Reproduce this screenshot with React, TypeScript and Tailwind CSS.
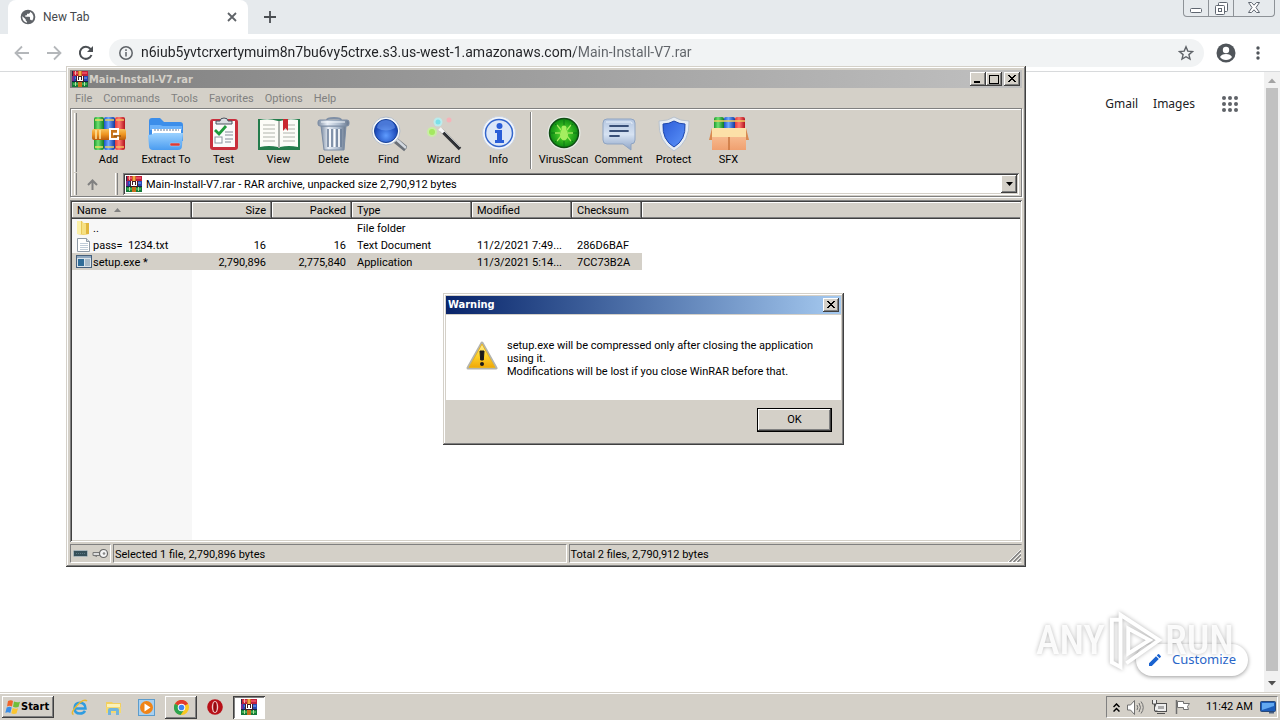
import type { ReactNode } from "react";

const raised =
  "bg-[#d4d0c8] shadow-[inset_-1px_-1px_#404040,inset_1px_1px_#fff,inset_-2px_-2px_#808080]";
const frame =
  "bg-[#d4d0c8] shadow-[inset_-1px_-1px_#404040,inset_1px_1px_#d4d0c8,inset_-2px_-2px_#808080,inset_2px_2px_#fff]";
const uiFont = "font-['Roboto','Noto_Sans',sans-serif]";
const wideFont = "font-['Noto_Sans','Open_Sans',sans-serif]";
const boldFont = "font-['DejaVu_Sans_Condensed','DejaVu_Sans','Noto_Sans',sans-serif] font-bold";

function RarIcon() {
  return (
    <svg width="16" height="16" viewBox="0 0 16 16" shapeRendering="crispEdges" aria-hidden="true">
      <rect width="16" height="16" fill="#2c2340" />
      <rect x="1" y="0" width="15" height="5" fill="#c0203c" />
      <rect x="2" y="1" width="13" height="2" fill="#e8485c" />
      <rect x="0" y="5" width="2" height="5" fill="#7a2a90" />
      <rect x="2" y="5" width="14" height="5" fill="#2748b0" />
      <rect x="3" y="6" width="12" height="2" fill="#5478e0" />
      <rect x="0" y="11" width="16" height="5" fill="#157a38" />
      <rect x="1" y="12" width="14" height="2" fill="#3cae54" />
      <rect x="0" y="10" width="16" height="1" fill="#14204a" />
      <rect x="3" y="0" width="1" height="4" fill="#f0b0a0" />
      <rect x="3" y="11" width="1" height="4" fill="#b8e0a0" />
      <rect x="12" y="11" width="1" height="4" fill="#b8e0a0" />
      <rect x="6" y="0" width="4" height="16" fill="#c8701c" />
      <rect x="7" y="0" width="2" height="5" fill="#f4a848" />
      <rect x="4" y="5" width="8" height="6" fill="#401c28" />
      <rect x="5" y="5" width="1" height="5" fill="#fff" />
      <rect x="10" y="5" width="1" height="5" fill="#fff" />
      <rect x="6" y="9" width="4" height="1" fill="#fff" />
      <rect x="7" y="6" width="2" height="3" fill="#fff" />
    </svg>
  );
}

function Svg({ children, w = 36 }: { children: ReactNode; w?: number }) {
  return (
    <svg width={w} height="36" viewBox={`0 0 ${w} 36`} aria-hidden="true">
      {children}
    </svg>
  );
}

function Defs() {
  return (
    <svg width="0" height="0" className="absolute" aria-hidden="true">
      <defs>
        <linearGradient id="red" x2="1">
          <stop stopColor="#e23a3a" /><stop offset=".4" stopColor="#ff7a70" /><stop offset="1" stopColor="#b3121e" />
        </linearGradient>
        <linearGradient id="green" x2="1">
          <stop stopColor="#1d9a2e" /><stop offset=".4" stopColor="#6fe070" /><stop offset="1" stopColor="#0f7a24" />
        </linearGradient>
        <linearGradient id="blue" x2="1">
          <stop stopColor="#1e55c8" /><stop offset=".4" stopColor="#6fa8ff" /><stop offset="1" stopColor="#123a9c" />
        </linearGradient>
        <linearGradient id="gold" x2="0" y2="1">
          <stop stopColor="#f9c25a" /><stop offset=".5" stopColor="#ee9420" /><stop offset="1" stopColor="#b85a0c" />
        </linearGradient>
        <linearGradient id="folder" x2="0" y2="1">
          <stop stopColor="#9cd2ff" /><stop offset="1" stopColor="#4a9cf0" />
        </linearGradient>
        <linearGradient id="steel" x2="1">
          <stop stopColor="#7d8da3" /><stop offset=".3" stopColor="#e8eef6" /><stop offset=".7" stopColor="#a9b8cb" /><stop offset="1" stopColor="#66758b" />
        </linearGradient>
        <radialGradient id="lens" cy=".7">
          <stop stopColor="#5f9cff" /><stop offset="1" stopColor="#1a48b8" />
        </radialGradient>
        <radialGradient id="scan">
          <stop stopColor="#5fe832" /><stop offset="1" stopColor="#0c8a12" />
        </radialGradient>
        <linearGradient id="bubble" x2="0" y2="1">
          <stop stopColor="#b4c6e0" /><stop offset=".5" stopColor="#d6e2f2" /><stop offset="1" stopColor="#8ea4c6" />
        </linearGradient>
        <linearGradient id="shield" x2="1" y2="1">
          <stop stopColor="#2c5cd8" /><stop offset="1" stopColor="#5c94fa" />
        </linearGradient>
        <linearGradient id="box" x2="0" y2="1">
          <stop stopColor="#f9c49a" /><stop offset="1" stopColor="#f0a070" />
        </linearGradient>
        <linearGradient id="warn" x2="0" y2="1">
          <stop stopColor="#fff0a0" /><stop offset=".5" stopColor="#ffd42a" /><stop offset="1" stopColor="#f0a808" />
        </linearGradient>
      </defs>
    </svg>
  );
}

const icons: Record<string, ReactNode> = {
  Add: (
    <Svg>
      <rect x="3" y="1" width="10" height="33" rx="2" fill="url(#green)" />
      <rect x="13" y="1" width="11" height="33" rx="2" fill="url(#blue)" />
      <rect x="24" y="1" width="10" height="33" rx="2" fill="url(#red)" />
      <path d="M4 4h8M4 31h8" stroke="#f0e060" strokeWidth="1.500" />
      <path d="M14 4h9M14 31h9" stroke="#e8d060" strokeWidth="1.500" />
      <path d="M25 4h8M25 31h8" stroke="#f5c060" strokeWidth="1.500" />
      <rect x="1" y="13" width="34" height="11" rx="2" fill="url(#gold)" />
      <path d="M5 14v9M9 14v9" stroke="#ffe6a0" strokeWidth="1.500" />
      <path d="M27 17v-4h-8v10h8v-3" fill="#c8741c" stroke="#fff" strokeWidth="2" />
      <path d="M22 18h6" stroke="#fff" strokeWidth="2.500" />
      <path d="M23 20h7" stroke="#7a4208" strokeWidth="1" />
    </Svg>
  ),
  "Extract To": (
    <Svg>
      <path d="M1 5q0-3 3-3h8l4 4h16q3 0 3 3v16H1z" fill="#3c8eea" />
      <path d="M2 9h10l3 1h19v4H2z" fill="#6cb2fa" />
      <path d="M4 13h29v8H4z" fill="#fff" />
      <path d="M6 14h25" stroke="#b0bccc" strokeWidth="2" strokeDasharray="2 1" />
      <path d="M0 19q4 0 6-2h29l-1 13q0 4-4 4H5q-4 0-4-4z" fill="url(#folder)" />
      <rect x="22" y="27" width="10" height="3" rx="1" fill="#e03a34" stroke="#b5d4f5" strokeWidth=".5" />
    </Svg>
  ),
  Test: (
    <Svg>
      <rect x="4" y="3" width="28" height="31" rx="3" fill="#c92e3c" />
      <rect x="7" y="5" width="22" height="26" fill="#fafafa" />
      <path d="M10 8V5h4q0-3 4-3t4 3h4v3z" fill="#d9dde2" stroke="#49525e" strokeWidth="1" />
      <path d="m9 14 4 4 7-8" fill="none" stroke="#1f9a3c" strokeWidth="2.800" />
      <rect x="9" y="21" width="7" height="6" fill="#fff" stroke="#8b959f" />
      <path d="M19 16h8M19 19h8M19 23h8M19 26h6" stroke="#848c98" strokeWidth="1.200" />
    </Svg>
  ),
  View: (
    <Svg w={44}>
      <path d="M1 3h42v31H1z" fill="#247c4c" />
      <path d="M3 4q9-2 18 1v26q-9-2-18 0zM41 4q-9-2-18 1v26q9-2 18 0z" fill="#fcfcf8" />
      <path d="M21 5h2v27h-2z" fill="#adb3ad" />
      <path d="M6 9h12M6 13h12M6 17h12M6 21h12M6 25h12M26 9h12M26 13h12M26 17h12M26 21h12M26 25h12" stroke="#c9cbc5" strokeWidth="1.300" />
      <path d="M26 3h5v12l-2.500-3-2.500 3z" fill="#c9282f" />
    </Svg>
  ),
  Delete: (
    <Svg>
      <path d="M11 4q0-2 7-2t7 2" fill="none" stroke="#7f8fa5" strokeWidth="2" />
      <path d="M5 10h25l-2 24H8z" fill="url(#steel)" stroke="#7b8ca4" />
      <path d="M12 13v18M16 13v18M21 13v18M25 13v18" stroke="#6a7c96" strokeWidth="1.500" />
      <path d="M14 13v18M18.500 13v18M23 13v18" stroke="#fff" strokeWidth="1.500" />
      <rect x="2" y="4" width="31" height="6" rx="2" fill="url(#steel)" stroke="#7d8da4" />
      <path d="M5 6h24" stroke="#f4f8fc" />
    </Svg>
  ),
  Find: (
    <Svg>
      <path d="m24 24 11 9" stroke="#6a7078" strokeWidth="6" />
      <path d="m25 23 10 9" stroke="#d3d9e0" strokeWidth="2.500" />
      <circle cx="15" cy="15" r="14" fill="#f5f8fb" stroke="#b3bdca" />
      <circle cx="15" cy="15" r="11.500" fill="url(#lens)" stroke="#174196" />
      <path d="M6 12q9 5 18 0-1-8-9-8t-9 8" fill="#7aa8f5" opacity=".5" />
    </Svg>
  ),
  Wizard: (
    <Svg>
      <path d="m15 14 19 19" stroke="#303236" strokeWidth="3.500" />
      <path d="m16 13 18 18" stroke="#b5b9bd" strokeWidth="1" />
      <path d="m13.500 12.500 4 4" stroke="#f5f5f5" strokeWidth="3.500" />
      <circle cx="6" cy="16" r="5" fill="#c4f59a" opacity=".8" />
      <circle cx="6" cy="16" r="3" fill="#a4e860" />
      <circle cx="12" cy="6" r="4.500" fill="#b4f2f6" opacity=".8" />
      <circle cx="12" cy="6" r="2.500" fill="#7ae0ea" />
      <circle cx="23" cy="4" r="2.500" fill="#f4b3b9" />
    </Svg>
  ),
  Info: (
    <Svg>
      <circle cx="18" cy="17" r="16.500" fill="#f2f5fa" stroke="#ccd4e0" />
      <circle cx="18" cy="17" r="13.500" fill="#dce7f8" stroke="#3466cc" strokeWidth="1.500" />
      <circle cx="18.500" cy="10" r="3" fill="#2a5ed8" />
      <path d="M14 14h7v10h2v3h-9v-3h2v-7h-2z" fill="#2a5ed8" />
    </Svg>
  ),
  VirusScan: (
    <Svg>
      <circle cx="18" cy="17" r="16.500" fill="#e8ece8" />
      <circle cx="18" cy="17" r="14.500" fill="url(#scan)" stroke="#114d14" strokeWidth="1.500" />
      <path d="M18 4v27M5 17h26M9 8l18 18M27 8 9 26" stroke="#086e12" strokeWidth=".8" />
      <path d="m11 9 4 5m10-5-4 5M9 17h5m8 0h5m-16 8 4-5m10 5-4-5" stroke="#a4ee60" strokeWidth="1.300" />
      <ellipse cx="18" cy="18.500" rx="4" ry="6" fill="#a4ee60" />
      <circle cx="18" cy="12" r="2.500" fill="#a4ee60" />
    </Svg>
  ),
  Comment: (
    <Svg>
      <path d="M6 3h24q4 0 4 4v17q0 4-4 4v6l-8-6H6q-4 0-4-4V7q0-4 4-4" fill="url(#bubble)" stroke="#8fa4c2" />
      <path d="M5 6h25q1 0 1 2" fill="none" stroke="#eaf2fb" />
      <path d="M9 10h18M9 15h18M9 20h9" stroke="#3a5078" strokeWidth="1.800" strokeLinecap="round" />
    </Svg>
  ),
  Protect: (
    <Svg>
      <path d="M18 1q6 4 15 4 1 21-15 30Q2 26 3 5q9 0 15-4" fill="#e6ecf3" stroke="#b8c2ce" />
      <path d="M18 5q5 3 11 3 1 16-11 23Q6 24 7 8q6 0 11-3" fill="url(#shield)" stroke="#1f48ac" />
    </Svg>
  ),
  SFX: (
    <Svg w={40}>
      <rect x="5" y="1" width="10" height="16" rx="2" fill="url(#green)" />
      <rect x="15" y="1" width="11" height="16" rx="2" fill="url(#blue)" />
      <rect x="26" y="1" width="10" height="16" rx="2" fill="url(#red)" />
      <path d="M5 5h10M15 5h11M26 5h10" stroke="#f0d060" strokeWidth="1.500" />
      <path d="M3 15h34v19H3z" fill="url(#box)" />
      <path d="M3 12h34l1 9H2z" fill="#fce0a8" />
      <path d="m3 12-3 12h3zM37 12l3 12h-3z" fill="#d98a50" />
      <path d="M20 21v13" stroke="#c8743e" strokeWidth="1.500" />
    </Svg>
  ),
};

const tools: [string, string][] = [
  ["Add", "w-[55px]"],
  ["Extract To", "w-[60px]"],
  ["Test", "w-[55px]"],
  ["View", "w-[55px]"],
  ["Delete", "w-[55px]"],
  ["Find", "w-[55px]"],
  ["Wizard", "w-[55px]"],
  ["Info", "w-[55px]"],
  ["|", ""],
  ["VirusScan", "w-[55px]"],
  ["Comment", "w-[55px]"],
  ["Protect", "w-[55px]"],
  ["SFX", "w-[55px]"],
];

function Gripper() {
  return <span className="w-[3px] self-stretch border-l border-r border-l-white border-r-[#808080]" />;
}

function FolderIcon() {
  return (
    <svg width="15" height="16" viewBox="0 0 15 16" aria-hidden="true">
      <path d="M1 1h5l1 2h6v11l-5 1-7-1z" fill="#e9c85a" />
      <path d="M1 1h4v13H1z" fill="#fbf0a8" />
      <path d="m6 2 4 2v11l-4-1z" fill="#f6e083" />
      <path d="M10 3h3v11h-3z" fill="#e0b640" />
    </svg>
  );
}
function TextIcon() {
  return (
    <svg width="15" height="16" viewBox="0 0 15 16" aria-hidden="true">
      <path d="M1.500 1.500h9l3 3v10h-12z" fill="#fff" stroke="#8f9aa6" />
      <path d="M10.500 1.500v3h3" fill="#d8e0e8" stroke="#8f9aa6" />
      <path d="M4 6.500h8M4 8.500h8M4 10.500h8M4 12.500h8" stroke="#c0ccd8" />
    </svg>
  );
}
function ExeIcon() {
  return (
    <svg width="16" height="16" viewBox="0 0 16 16" aria-hidden="true">
      <rect x=".5" y="1.500" width="15" height="12" fill="#d8e2ea" stroke="#46607c" />
      <path d="M1 2h14v2H1z" fill="#8fa8c0" />
      <path d="M2 5h6v7H2z" fill="#2f6c98" />
      <path d="M9 5h5v7H9z" fill="#a8bac8" />
    </svg>
  );
}

const rows = [
  { icon: <FolderIcon />, name: "..", size: "", packed: "", type: "File folder", mod: "", sum: "", sel: false },
  { icon: <TextIcon />, name: "pass=  1234.txt", size: "16", packed: "16", type: "Text Document", mod: "11/2/2021 7:49...", sum: "286D6BAF", sel: false },
  { icon: <ExeIcon />, name: "setup.exe *", size: "2,790,896", packed: "2,775,840", type: "Application", mod: "11/3/2021 5:14...", sum: "7CC73B2A", sel: true },
];

const headers: [string, string, string][] = [
  ["Name", "w-[120px]", "text-left pl-[5px]"],
  ["Size", "w-[80px]", "text-right pr-[6px]"],
  ["Packed", "w-[80px]", "text-right pr-[6px]"],
  ["Type", "w-[120px]", "text-left pl-[5px]"],
  ["Modified", "w-[100px]", "text-left pl-[5px]"],
  ["Checksum", "w-[70px]", "text-left pl-[5px]"],
];

function CaptionButton({ label, children }: { label: string; children: ReactNode }) {
  return (
    <button aria-label={label} className={`flex h-[14px] w-4 items-center justify-center ${raised}`}>
      <svg width="12" height="12" viewBox="0 0 12 12" fill="none" stroke="#000" shapeRendering="crispEdges" aria-hidden="true">
        {children}
      </svg>
    </button>
  );
}
const cross = <path d="m2 2 7 7M3 2l7 7M9 2 2 9M10 2 3 9" strokeWidth="1" shapeRendering="auto" />;

function WinRar() {
  return (
    <section aria-label="WinRAR" className={`absolute top-[66px] right-[254px] left-[66px] flex h-[501px] flex-col p-1 text-[11px] leading-[17px] text-black ${frame} ${uiFont}`}>
      <header className="flex h-[18px] shrink-0 items-center bg-linear-to-r from-[#808080] to-[#c0c0c0] pr-0.5 pl-0.5">
        <RarIcon />
        <h1 className={`flex-1 pl-px text-[#d4d0c8] ${boldFont}`}>Main-Install-V7.rar</h1>
        <CaptionButton label="Minimize"><path d="M2 9h6" strokeWidth="2" /></CaptionButton>
        <CaptionButton label="Maximize"><path d="M1.500 2.500h9v8h-9zM1 2h10" strokeWidth="1" /></CaptionButton>
        <span className="w-0.5" />
        <CaptionButton label="Close">{cross}</CaptionButton>
      </header>
      <nav className="flex h-[20px] shrink-0 items-center gap-[11px] pl-[5px] text-[#808080]">
        {["File", "Commands", "Tools", "Favorites", "Options", "Help"].map((m) => (
          <button key={m}>{m}</button>
        ))}
      </nav>
      <div className="flex shrink-0 flex-col border border-[#808080] shadow-[inset_1px_1px_#fff,1px_1px_#fff]">
        <div className="flex h-16 items-stretch pt-[3px] pl-[3px]">
          <div className="flex py-px pr-1"><Gripper /></div>
          {tools.map(([name, w]) =>
            name === "|" ? (
              <div key={name} className="flex w-2.5 justify-center pb-1">
                <span className="w-0.5 border-l border-l-[#808080] bg-white" />
              </div>
            ) : (
              <button key={name} className={`flex flex-col items-center pt-1 ${w}`}>
                {icons[name]}
                <span className="-mt-px whitespace-nowrap">{name}</span>
              </button>
            ),
          )}
        </div>
        <div className="flex h-[23px] items-stretch pr-0.5 pb-px pl-[3px]">
          <Gripper />
          <button aria-label="Up one level" className="flex w-[30px] items-center justify-center">
            <svg width="11" height="11" viewBox="0 0 11 11" fill="none" stroke="#808080" strokeWidth="2" aria-hidden="true">
              <path d="M5.500 11V2M1 6l4.500-4.500L10 6" />
            </svg>
          </button>
          <span className="w-2" />
          <Gripper />
          <div className="ml-[5px] flex flex-1 items-center bg-white py-0.5 pr-0.5 pl-[3px] shadow-[inset_1px_1px_#808080,inset_-1px_-1px_#fff,inset_2px_2px_#404040,inset_-2px_-2px_#d4d0c8]">
            <RarIcon />
            <select aria-label="Archive path" className="h-full flex-1 appearance-none bg-transparent pl-1 outline-none">
              <option>Main-Install-V7.rar - RAR archive, unpacked size 2,790,912 bytes</option>
            </select>
            <span className={`pointer-events-none flex w-4 items-center justify-center self-stretch ${raised}`}>
              <svg width="7" height="4" viewBox="0 0 7 4" aria-hidden="true"><path d="M0 0h7L3.500 4z" /></svg>
            </span>
          </div>
        </div>
      </div>
      <div className="mt-[3px] flex-1 overflow-hidden bg-[linear-gradient(to_right,#f7f7f7_122px,#fff_122px)] p-0.5 shadow-[inset_1px_1px_#808080,inset_-1px_-1px_#fff,inset_2px_2px_#404040,inset_-2px_-2px_#d4d0c8]">
        <table className="w-full table-fixed border-collapse">
          <thead>
            <tr className="h-[17px] bg-[#d4d0c8]">
              {headers.map(([h, w, a]) => (
                <th key={h} className={`pt-px pb-0 font-normal leading-[16px] shadow-[inset_-1px_-1px_#404040,inset_-2px_-2px_#808080,inset_1px_1px_#fff] ${w} ${a}`}>
                  {h}
                  {h === "Name" && (
                    <svg className="mb-0.5 ml-2 inline" width="7" height="4" viewBox="0 0 7 4" aria-hidden="true"><path d="M0 4h7L3.500 0z" fill="#808080" /></svg>
                  )}
                </th>
              ))}
              <td className="shadow-[inset_0_-1px_#404040,inset_0_-2px_#808080,inset_1px_1px_#fff]" />
            </tr>
          </thead>
          <tbody className="leading-[15px]">
            {rows.map((r) => {
              const bg = r.sel ? "bg-[#d4d0c8]" : "";
              return (
                <tr key={r.name} className="h-[17px] whitespace-pre">
                  <td className={`py-0 pl-1 ${bg}`}>
                    <span className="flex h-[17px] items-center">
                      <span className="flex w-[17px]">{r.icon}</span>
                      <span className="pt-0.5">{r.name}</span>
                    </span>
                  </td>
                  <td className={`pt-0.5 pb-0 pr-[6px] text-right ${bg}`}>{r.size}</td>
                  <td className={`pt-0.5 pb-0 pr-[6px] text-right ${bg}`}>{r.packed}</td>
                  <td className={`pt-0.5 pb-0 pl-[5px] ${bg}`}>{r.type}</td>
                  <td className={`pt-0.5 pb-0 pl-[5px] ${bg}`}>{r.mod}</td>
                  <td className={`pt-0.5 pb-0 pl-[5px] ${bg}`}>{r.sum}</td>
                  <td />
                </tr>
              );
            })}
          </tbody>
        </table>
      </div>
      <footer className="mt-0.5 flex h-[19px] shrink-0 gap-0.5 leading-[19px] whitespace-nowrap">
        <div className="flex w-[41px] items-center justify-center gap-1 border border-t-[#808080] border-r-white border-b-white border-l-[#808080]">
          <svg width="15" height="7" viewBox="0 0 15 7" aria-hidden="true">
            <rect x=".5" y=".5" width="14" height="6" rx="1" fill="#37505a" stroke="#a8b4ba" />
            <path d="M3 3.500h9" stroke="#5d7985" strokeDasharray="1 1" />
          </svg>
          <svg width="17" height="11" viewBox="0 0 17 11" aria-hidden="true">
            <path d="M1 4.500h9v3H1zM2 7.500l3 1" fill="#ddd" stroke="#777" />
            <circle cx="11.500" cy="5.500" r="4" fill="#f4f4f4" stroke="#666" strokeWidth="1.200" />
            <circle cx="12" cy="5.500" r="1.300" fill="#888" />
          </svg>
        </div>
        <div className="flex-1 border border-t-[#808080] border-r-white border-b-white border-l-[#808080] pl-px">Selected 1 file, 2,790,896 bytes</div>
        <div className="flex flex-1 justify-between border border-t-[#808080] border-r-[#d4d0c8] border-b-white border-l-[#808080] pl-px">
          Total 2 files, 2,790,912 bytes
          <svg className="self-end" width="13" height="13" viewBox="0 0 13 13" aria-hidden="true">
            <path d="M0 13 13 0M4 13l9-9M8 13l5-5" stroke="#fff" />
            <path d="M1.500 13 13 1.500M5.500 13 13 5.500M9.500 13 13 9.500" stroke="#808080" strokeWidth="1.500" />
          </svg>
        </div>
      </footer>
    </section>
  );
}

function Warning() {
  return (
    <div role="alertdialog" aria-labelledby="warn-title" className={`absolute top-[293px] left-[443px] flex h-[152px] w-[401px] flex-col p-[3px] text-[11px] text-black ${frame} ${uiFont}`}>
      <header className="flex h-[18px] shrink-0 items-center justify-between bg-linear-to-r from-[#0a246a] to-[#a6caf0] px-0.5">
        <h2 id="warn-title" className={`text-white ${boldFont}`}>Warning</h2>
        <CaptionButton label="Close">{cross}</CaptionButton>
      </header>
      <div className="mt-px flex flex-1 items-start bg-white pt-6 pl-5">
        <svg className="mt-0.5" width="32" height="30" viewBox="0 0 32 30" aria-hidden="true">
          <path d="M16 2 30 27H2z" fill="url(#warn)" stroke="#b4b4ac" strokeWidth="3" strokeLinejoin="round" />
          <path d="M16 3 29 26.500H3z" fill="url(#warn)" stroke="#e8b420" strokeWidth="1" strokeLinejoin="round" />
          <path d="M14 10h4l-.7 9h-2.600z" fill="#1a1a1a" stroke="#1a1a1a" strokeLinejoin="round" />
          <circle cx="16" cy="23" r="2" fill="#1a1a1a" />
        </svg>
        <p className="ml-[9px] leading-[13px] whitespace-nowrap">
          setup.exe will be compressed only after closing the application
          <br />
          using it.
          <br />
          Modifications will be lost if you close WinRAR before that.
        </p>
      </div>
      <footer className="flex h-[42px] shrink-0 justify-end pt-2 pr-[9px]">
        <button className="h-6 w-[75px] border border-black bg-[#d4d0c8] shadow-[inset_-1px_-1px_#404040,inset_1px_1px_#fff,inset_-2px_-2px_#808080]">OK</button>
      </footer>
    </div>
  );
}

function Browser() {
  return (
    <main className={`flex min-h-0 flex-1 flex-col bg-white text-[#202124] ${uiFont}`}>
      <div className="flex h-[34px] shrink-0 items-start bg-[#e6eaed] pl-2">
        <div className="flex h-[34px] w-60 items-center rounded-t-lg bg-white pr-2 pl-3">
          <svg width="16" height="16" viewBox="0 0 24 24" fill="#5f6368" aria-hidden="true">
            <path d="M12 1a11 11 0 1 0 0 22 11 11 0 0 0 0-22m-1.500 19.500A8.600 8.600 0 0 1 3.500 11l5 4.500v1.500l2 2zm7.500-3c-.3-1-1-1.500-2-1.500h-1v-3.500l-1-1H8v-2h2.500V7h3l1.500-1.500V4a8.600 8.600 0 0 1 3 13.500" />
          </svg>
          <span className="ml-[7px] flex-1 text-[12px] text-[#45494d]">New Tab</span>
          <button aria-label="Close tab">
            <svg width="16" height="16" viewBox="0 0 16 16" stroke="#5f6368" strokeWidth="1.800" aria-hidden="true"><path d="m4 4 8 8M12 4l-8 8" /></svg>
          </button>
        </div>
        <button aria-label="New tab" className="ml-3.5 flex h-[34px] items-center">
          <svg width="16" height="16" viewBox="0 0 16 16" stroke="#4a4e52" strokeWidth="1.800" aria-hidden="true"><path d="M8 2v12M2 8h12" /></svg>
        </button>
        <div className="mr-[5px] ml-auto flex h-[17px] rounded-b border border-t-0 border-[#8d9297]">
          <button aria-label="Minimize window" className="flex w-[25px] items-end justify-center border-r border-[#8d9297] pb-[3px]">
            <svg width="12" height="5" viewBox="0 0 12 5" aria-hidden="true"><rect x=".5" y=".5" width="11" height="4" rx="1" fill="#fff" stroke="#5f6670" /></svg>
          </button>
          <button aria-label="Restore window" className="flex w-[25px] items-end justify-center border-r border-[#8d9297] pb-px">
            <svg width="13" height="13" viewBox="0 0 13 13" fill="#fff" stroke="#5f6670" aria-hidden="true"><rect x="3.500" y=".5" width="9" height="9" rx="1" /><rect x=".5" y="3.500" width="9" height="9" rx="1" /><rect x="3.500" y="6.500" width="3" height="3" /></svg>
          </button>
          <button aria-label="Close window" className="flex w-10 items-end justify-center pb-[3px]">
            <svg width="12" height="11" viewBox="0 0 12 11" aria-hidden="true"><path d="M.5.500h3L6 3.200 8.500.500h3L8 5.500l3.500 5h-3L6 7.800l-2.500 2.700h-3L4 5.500z" fill="#fff" stroke="#5f6670" /></svg>
          </button>
        </div>
      </div>
      <div className="flex h-[38px] shrink-0 items-center border-b border-[#d8dadc] pr-[18px] pl-3.5">
        <div className="flex items-center gap-4 text-[#5f6368]">
          <button aria-label="Back"><svg width="16" height="16" viewBox="0 0 16 16" fill="none" stroke="#b4b7ba" strokeWidth="1.800" aria-hidden="true"><path d="M15 8H2M8 1.500 1.500 8 8 14.500" /></svg></button>
          <button aria-label="Forward"><svg width="16" height="16" viewBox="0 0 16 16" fill="none" stroke="#b4b7ba" strokeWidth="1.800" aria-hidden="true"><path d="M1 8h13M8 1.500 14.500 8 8 14.500" /></svg></button>
          <button aria-label="Reload"><svg width="16" height="16" viewBox="0 0 16 16" fill="none" stroke="#4c5054" strokeWidth="2" aria-hidden="true"><path d="M13.500 10A6 6 0 1 1 12.500 4L14 5.500" /><path d="M15 1v6H9z" fill="#4c5054" stroke="none" /></svg></button>
        </div>
        <div className="ml-[15px] flex h-7 flex-1 items-center rounded-full bg-[#f1f3f4] px-2.5">
          <svg width="14" height="14" viewBox="0 0 14 14" fill="none" stroke="#5f6368" strokeWidth="1.500" aria-hidden="true"><circle cx="7" cy="7" r="6.200" /><path d="M7 6v4.500M7 3.300v1.600" /></svg>
          <input
            aria-label="Address"
            readOnly
            className="ml-2 min-w-0 flex-1 bg-[linear-gradient(to_right,#202124_434px,#5f6368_434px)] bg-clip-text text-[14px] text-transparent outline-none"
            value="n6iub5yvtcrxertymuim8n7bu6vy5ctrxe.s3.us-west-1.amazonaws.com/Main-Install-V7.rar"
          />
          <button aria-label="Bookmark"><svg width="16" height="16" viewBox="0 0 16 16" fill="none" stroke="#5f6368" strokeWidth="1.400" aria-hidden="true"><path d="m8 1.800 1.800 4.300 4.700.4-3.600 3.100 1.100 4.500-4-2.400-4 2.400 1.100-4.500L1.500 6.500l4.700-.4z" /></svg></button>
        </div>
        <button aria-label="Profile" className="ml-3"><svg width="20" height="20" viewBox="0 0 20 20" aria-hidden="true"><circle cx="10" cy="10" r="9.500" fill="#50555a" /><circle cx="10" cy="7" r="3.200" fill="#fff" /><path d="M4 14q1.500-3 6-3t6 3q-2 3-6 3t-6-3" fill="#fff" /></svg></button>
        <button aria-label="Menu" className="ml-[18px]"><svg width="8" height="16" viewBox="0 0 8 16" fill="#50555a" aria-hidden="true"><circle cx="4" cy="3" r="1.700" /><circle cx="4" cy="8" r="1.700" /><circle cx="4" cy="13" r="1.700" /></svg></button>
      </div>
      <div className={`flex min-h-0 flex-1 ${wideFont}`}>
        <div className="flex flex-1 flex-col items-end justify-between">
          <div className="flex items-center gap-[15px] pt-6 pr-[26px] text-[12px] leading-4">
            <a href="#gmail">Gmail</a>
            <a href="#images">Images</a>
            <button aria-label="Apps" className="ml-3"><svg width="16" height="16" viewBox="0 0 16 16" fill="#5f6368" aria-hidden="true">{[2, 8, 14].map((y) => [2, 8, 14].map((x) => <circle key={`${x}-${y}`} cx={x} cy={y} r="2" />))}</svg></button>
          </div>
          <button className="mr-4 mb-4 flex h-8 w-28 items-center rounded-full bg-white pl-3 text-[13px] text-[#2a66c8] shadow-[0_1px_4px_rgba(0,0,0,0.4)]">
            <svg width="14" height="14" viewBox="0 0 14 14" fill="#1a63d0" aria-hidden="true"><path d="M1 10.200V13h2.800l7-7L8 3.200zM12.700 4.100q.6-.6 0-1.200l-1.600-1.600q-.6-.6-1.200 0L8.800 2.400l2.800 2.800z" /></svg>
            <span className="ml-2.5">Customize</span>
          </button>
        </div>
        <div aria-hidden="true" className="flex w-4 flex-col items-center bg-[#f1f1f1]">
          <svg className="h-4 shrink-0" width="8" height="16" viewBox="0 0 8 16"><path d="M0 11h8L4 6.500z" fill="#a3a3a3" /></svg>
          <div className="w-3 flex-1 bg-[#c1c1c1]" />
          <svg className="h-[21px] shrink-0" width="8" height="21" viewBox="0 0 8 21"><path d="M0 10h8l-4 4.500z" fill="#505050" /></svg>
        </div>
      </div>
    </main>
  );
}

function Watermark() {
  return (
    <div className="pointer-events-none absolute right-[46px] bottom-[49px] flex items-center font-['Liberation_Sans_Narrow','Roboto_Condensed','Liberation_Sans',sans-serif] text-[40px] leading-none font-medium text-white/90 [filter:drop-shadow(0_0_2px_rgba(0,0,0,0.3))]">
      <span>ANY</span>
      <svg className="mx-0.5" width="56" height="60" viewBox="0 0 58 60" fill="none" stroke="#fff" strokeWidth="4" aria-hidden="true">
        <path d="M12 8H5v44l9 5V3l40 26-34 24M22 17v26l22-14zM22 8l32 21" />
      </svg>
      <span>RUN</span>
    </div>
  );
}

const win = "flex h-[23px] w-8 items-center justify-center";

function Taskbar() {
  return (
    <footer className={`flex h-7 shrink-0 items-center border-t border-[#d4d0c8] bg-[#d4d0c8] pt-px pr-0.5 pl-0.5 text-[11px] text-black shadow-[inset_0_1px_#fff] ${uiFont}`}>
      <button className={`flex h-[22px] w-[52px] items-center pl-[3px] ${raised} ${boldFont}`}>
        <svg width="16" height="16" viewBox="0 0 16 16" aria-hidden="true">
          <path d="M3 2q3-1.500 5 0L7 7.500q-2.500-1.500-5 0z" fill="#f0642a" />
          <path d="M9 2.500q3 1.500 6 .3L13.500 8q-3 1-5.500-.2z" fill="#6fbe3a" />
          <path d="M1.700 8.500q3-1.300 5 0L5.300 14q-2-1.500-5-.2z" fill="#3a8ee8" />
          <path d="M7.700 9q2.500 1.500 5.300.3L11.500 14.500q-3 1-5.200-.2z" fill="#fbc52e" />
        </svg>
        Start
      </button>
      <div className="flex flex-1 items-center pl-[17px]">
        <a href="#ie" aria-label="Internet Explorer" className="mr-[17px]">
          <svg width="17" height="17" viewBox="0 0 17 17" fill="none" aria-hidden="true">
            <path d="M3.500 9.500h11q-.2-5.800-5.500-5.800T3.500 9.200q0 5.300 5.500 5.300 3.500 0 5-2.700" stroke="#2f9ce0" strokeWidth="2.500" />
            <path d="M2.500 15.500Q-1 14 6 6.500T16 2" stroke="#e8b830" strokeWidth="1.500" />
          </svg>
        </a>
        <a href="#explorer" aria-label="Explorer" className="mr-4">
          <svg width="17" height="17" viewBox="0 0 17 17" aria-hidden="true">
            <path d="M1 3h6l1 1h8v10H1z" fill="#f2cf60" /><path d="M2 5h13v5H2z" fill="#fbf1b8" />
            <path d="M1 8h15v6H1z" fill="#f4d970" /><path d="M3 16V11q0-2 2-2h7q2 0 2 2v5h-3v-4H6v4z" fill="#72b4dc" />
          </svg>
        </a>
        <a href="#media" aria-label="Media Player" className="mr-2.5">
          <svg width="17" height="17" viewBox="0 0 17 17" aria-hidden="true">
            <rect x=".5" y=".5" width="16" height="16" fill="#a8d0f0" stroke="#5c9ccc" /><circle cx="8.500" cy="8.500" r="6.500" fill="#f08418" /><path d="m6.500 4.500 6 4-6 4z" fill="#fff" />
          </svg>
        </a>
        <button aria-label="Chrome" className={`${win} ${raised}`}>
          <svg width="15" height="15" viewBox="0 0 16 16" aria-hidden="true">
            <circle cx="8" cy="8" r="8" fill="#f9c822" /><path d="M8 8 1 4a8 8 0 0 1 14 0z" fill="#e23b2e" /><path d="M8 8 1 4a8 8 0 0 0 6 12l4-6z" fill="#2da44e" />
            <circle cx="8" cy="8" r="4" fill="#fff" /><circle cx="8" cy="8" r="3" fill="#3f83f0" />
          </svg>
        </button>
        <a href="#opera" aria-label="Opera" className="mx-2.5">
          <svg width="16" height="16" viewBox="0 0 16 16" aria-hidden="true">
            <circle cx="8" cy="8" r="7.800" fill="#b81018" /><ellipse cx="8" cy="8" rx="3.200" ry="6" fill="#f0c8c8" /><ellipse cx="8" cy="8" rx="1.800" ry="5" fill="#98080f" />
          </svg>
        </a>
        <button aria-label="WinRAR" className={`${win} bg-white shadow-[inset_1px_1px_#404040,inset_-1px_-1px_#fff,inset_2px_2px_#808080]`}><RarIcon /></button>
      </div>
      <div className="flex h-[22px] w-[172px] items-center justify-between border border-t-[#808080] border-r-white border-b-white border-l-[#808080] pr-px pl-1.5">
        <svg width="7" height="9" viewBox="0 0 7 9" fill="none" stroke="#000" strokeWidth="1.500" aria-hidden="true"><path d="m.5 4 3-3 3 3M.5 8.500l3-3 3 3" /></svg>
        <svg width="17" height="15" viewBox="0 0 17 15" fill="none" stroke="#707070" aria-hidden="true"><path d="M.5 5h3l4-4.500v14l-4-4.500h-3z" fill="#fff" /><path d="M10 5q1.500 2.500 0 5M12 3q3 4.500 0 9M14 1.500q4.500 6 0 12" /></svg>
        <svg width="16" height="16" viewBox="0 0 16 16" fill="#eee" stroke="#505050" aria-hidden="true"><rect x="4.500" y="4.500" width="11" height="8" /><path d="M7 7h6v3H7z" fill="#aaa" stroke="none" /><path d="M6 14.500h8M1.500 1v4h4V1M3.500 5v7h3" /></svg>
        <svg width="16" height="16" viewBox="0 0 16 16" fill="#fff" stroke="#707070" aria-hidden="true"><path d="M1.500 1v14" strokeWidth="1.500" /><path d="M2.500 2.500h6v2h6l-2 3 1 3h-5v-2h-6z" /></svg>
        <time className="ml-2 whitespace-nowrap">11:42 AM</time>
        <svg width="16" height="14" viewBox="0 0 16 14" aria-hidden="true"><rect x=".5" y="1.500" width="15" height="10" rx="1" fill="#1c5cb8" stroke="#284878" /><path d="M2 3h12v3L2 10z" fill="#62a8f0" /><path d="M9 12h5v1.500H9z" fill="#4a6080" /></svg>
      </div>
    </footer>
  );
}

export default function App() {
  return (
    <div className="relative flex h-screen min-h-[600px] flex-col overflow-hidden bg-white">
      <Defs />
      <Browser />
      <Taskbar />
      <WinRar />
      <Warning />
      <Watermark />
    </div>
  );
}
